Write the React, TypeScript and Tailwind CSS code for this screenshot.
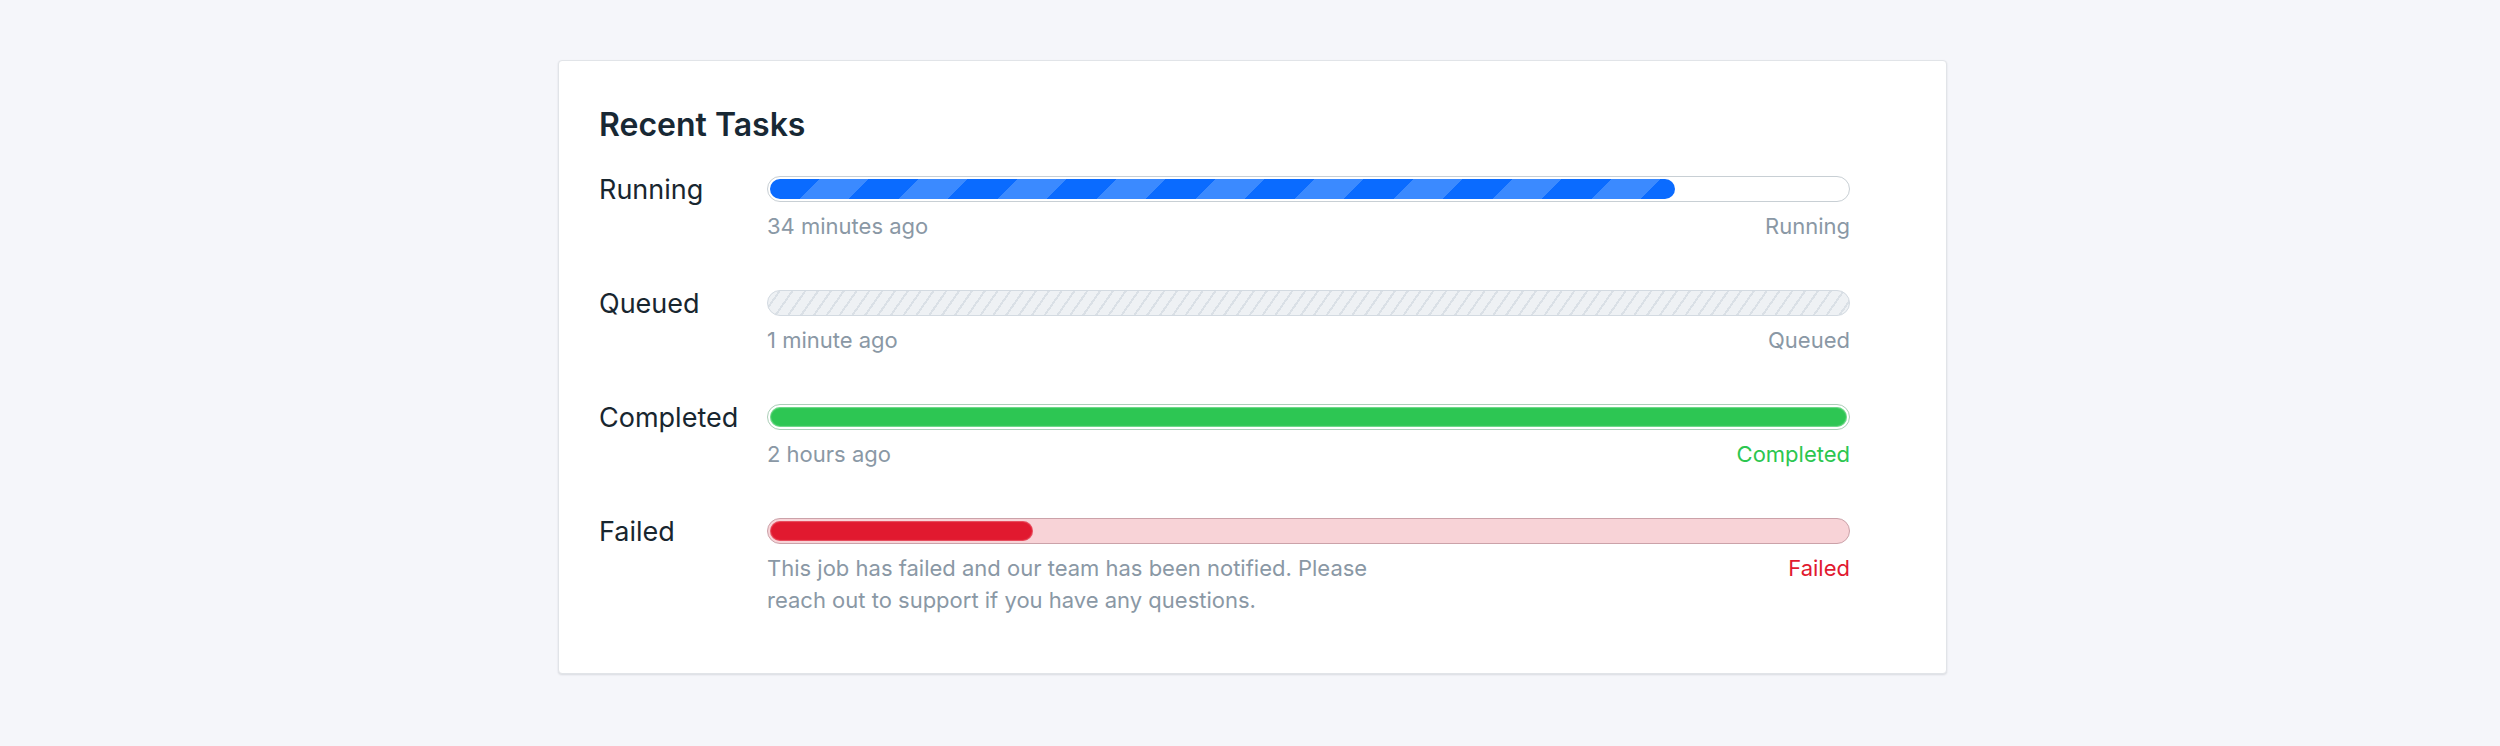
import React from 'react';

type Task = {
  label: string;
  time: string;
  status: string;
  statusClass: string;
  track: string;
  fill: string | null;
  fillStyle?: React.CSSProperties;
  width: string;
};

const TASKS: Task[] = [
  {
    label: 'Running',
    time: '34 minutes ago',
    status: 'Running',
    statusClass: 'text-[#8a98a5]',
    track: 'border-[#c8cfd4] bg-white',
    fill: 'bg-[#0a6bff]',
    fillStyle: {
      backgroundImage: 'repeating-linear-gradient(135deg, #0a6bff 0px, #0a6bff 35px, #3b8aff 35px, #3b8aff 70px)',
    },
    width: '84%',
  },
  {
    label: 'Queued',
    time: '1 minute ago',
    status: 'Queued',
    statusClass: 'text-[#8a98a5]',
    track: 'border-[#d3dae1] bg-[#eef1f4]',
    fill: null,
    width: '0%',
  },
  {
    label: 'Completed',
    time: '2 hours ago',
    status: 'Completed',
    statusClass: 'text-[#2cc64f]',
    track: 'border-[#abcfb8] bg-white',
    fill: 'bg-[#2dc653] shadow-[inset_0_0_1px_1px_rgba(255,255,255,0.35)]',
    width: '100%',
  },
  {
    label: 'Failed',
    time: 'This job has failed and our team has been notified. Please reach out to support if you have any questions.',
    status: 'Failed',
    statusClass: 'text-[#e1192f]',
    track: 'border-[#cba2a9] bg-[#f8d3d7]',
    fill: 'bg-[#e1192f] shadow-[inset_0_0_1px_1px_rgba(255,255,255,0.25)]',
    width: '24.4%',
  },
];

export default function App() {
  return (
    <div className="min-h-[746px] bg-[#f5f6fa] pt-[60px]" style={{ fontFamily: 'Inter, "Noto Sans", sans-serif' }}>
      <div className="ml-[558px] w-[1389px] rounded-[4px] border border-[#e1e4e8] bg-white pl-[40px] pr-[96px] pt-[44px] pb-[57px] shadow-[0_1px_2px_rgba(15,23,42,0.12)]">
        <h2 className="mb-[31px] text-[32px] font-semibold leading-[40px] text-[#182834]">Recent Tasks</h2>
        <div className="flex flex-col gap-[48px]">
          {TASKS.map((task) => (
            <TaskRow key={task.label} task={task} />
          ))}
        </div>
      </div>
    </div>
  );
}

function TaskRow({ task }: { task: Task }) {
  const queued = task.fill === null;
  return (
    <div className="flex">
      <div className="flex h-[26px] w-[168px] shrink-0 items-center text-[27px] leading-none text-[#18262f]">{task.label}</div>
      <div className="flex-1">
        <div
          className={`h-[26px] overflow-hidden rounded-full border-[1.5px] p-[2px] ${task.track}`}
          style={
            queued
              ? {
                  backgroundImage:
                    'repeating-linear-gradient(125deg, #eef1f4 0px, #eef1f4 8.5px, #dae0e6 8.5px, #dae0e6 10.5px)',
                }
              : undefined
          }
        >
          {task.fill ? (
            <div className={`h-full rounded-full ${task.fill}`} style={{ width: task.width, ...task.fillStyle }} />
          ) : null}
        </div>
        <div className="mt-[8px] flex items-start justify-between text-[22px] leading-[32px]">
          <div className={`${task.label === 'Failed' ? 'w-[620px]' : ''} text-[#8a98a5]`}>{task.time}</div>
          <div className={task.statusClass}>{task.status}</div>
        </div>
      </div>
    </div>
  );
}
